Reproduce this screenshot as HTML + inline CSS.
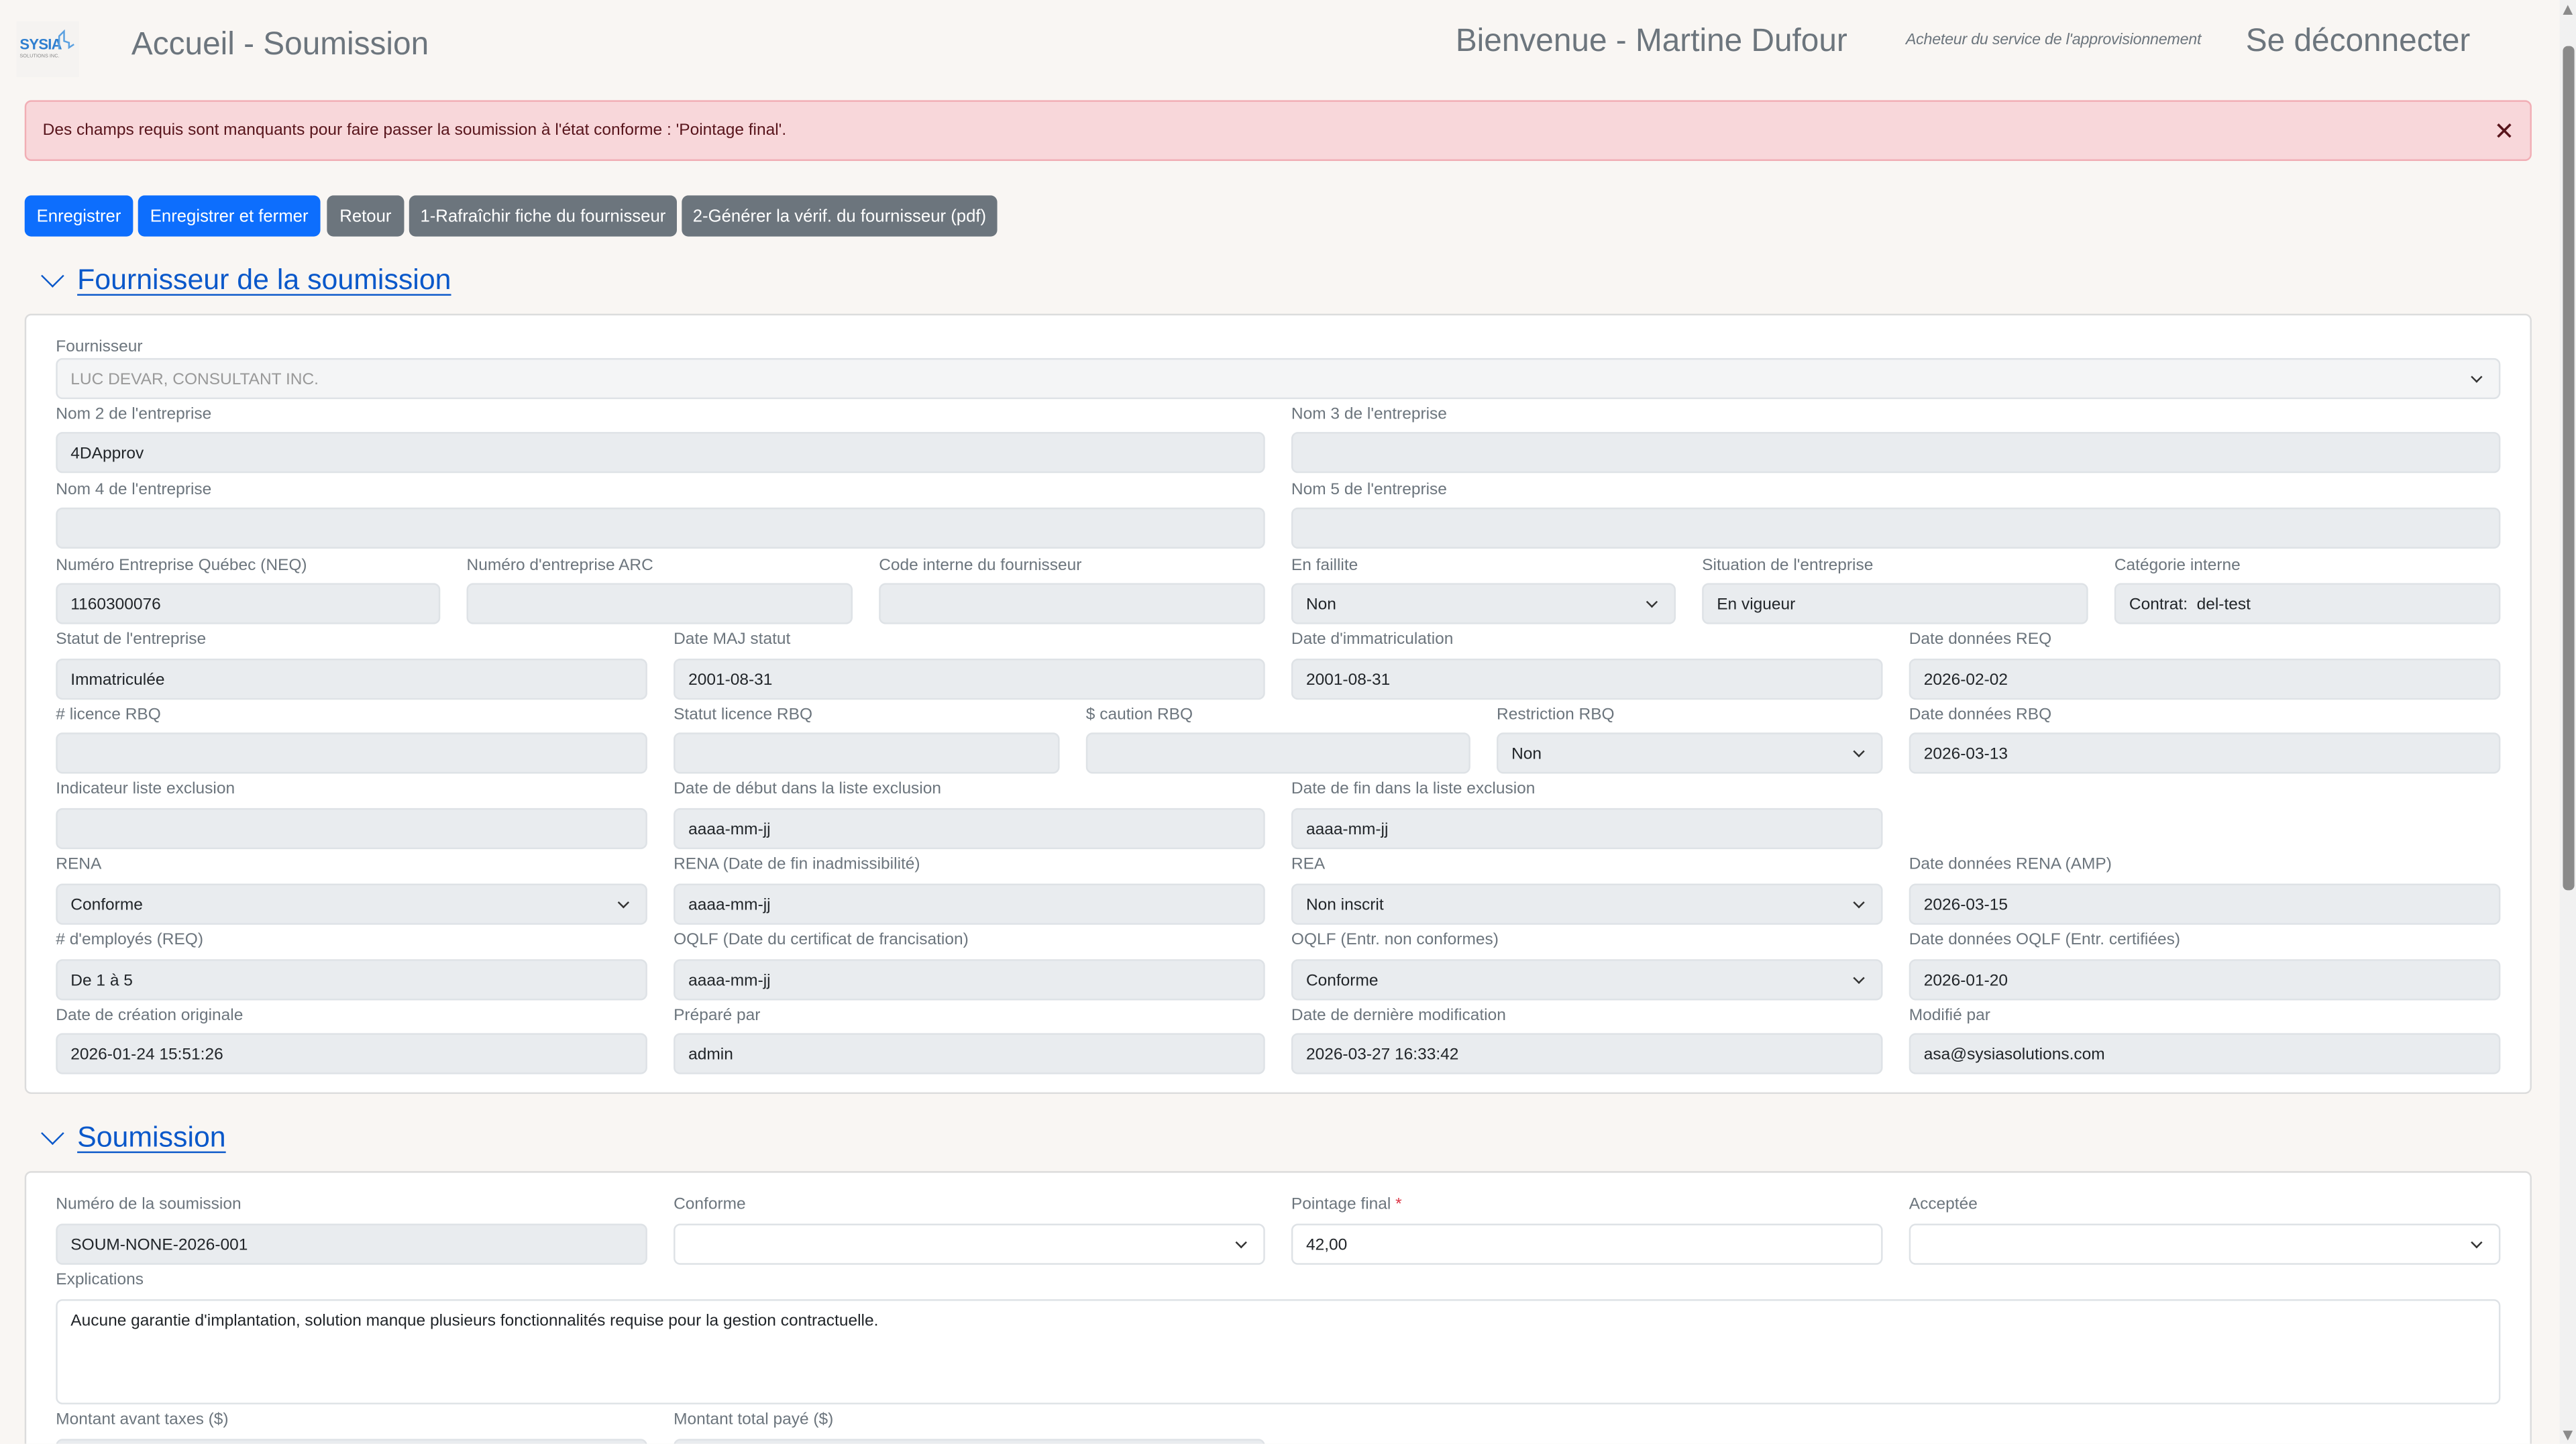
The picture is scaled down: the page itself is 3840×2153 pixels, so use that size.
<!DOCTYPE html>
<html><head><meta charset="utf-8"><style>
html,body{margin:0;padding:0;width:3840px;height:2152px;overflow:hidden;background:#f9f6f3;}
#r{position:absolute;left:0;top:0;width:1568px;height:879px;transform:scale(2.449);transform-origin:0 0;font-family:"Liberation Sans",sans-serif;overflow:hidden;}
.a{position:absolute;white-space:nowrap;}
.l{position:absolute;font-size:10px;line-height:12px;color:#6c757d;white-space:nowrap;margin-top:1.5px;}
.i{position:absolute;height:25px;box-sizing:border-box;border:1px solid #dee2e6;border-radius:4px;background:#e9ecef;font-size:10px;padding-left:8px;line-height:25px;color:#212529;white-space:nowrap;}
.w{background:#fff;}
.s::after{content:"";position:absolute;right:11px;top:8px;width:4px;height:4px;border-right:1px solid #333;border-bottom:1px solid #333;transform:rotate(45deg);}
.b{position:absolute;top:119px;height:25px;border-radius:4px;color:#fff;font-size:10.5px;line-height:27px;text-align:center;}
.bp{background:#0d6efd}.bg{background:#6c757d}
.h{position:absolute;font-size:17.5px;color:#0a58ca;text-decoration:underline;text-underline-offset:3px;white-space:nowrap;}
.ch{position:absolute;width:9px;height:9px;border-right:1.3px solid #0a58ca;border-bottom:1.3px solid #0a58ca;transform:rotate(45deg);}
.card{position:absolute;left:15px;width:1526px;background:#fff;border:1px solid #dcdcdc;border-radius:4px;box-sizing:border-box;}
</style></head><body><div id="r">
<div class="a" style="left:10px;top:13px;width:38px;height:34px;background:#f5f3f1"></div>
<div class="a" style="left:12px;top:22px;font-size:9px;font-weight:bold;color:#2f7fd0;letter-spacing:-0.3px">SYSIA</div>
<div class="a" style="left:12px;top:32px;font-size:3px;color:#888">SOLUTIONS INC.</div>
<svg class="a" style="left:34px;top:18px" width="12" height="14" viewBox="0 0 12 14"><path d="M2 12V4l3-3v6l3 1v3l3-2" fill="none" stroke="#5aa0e0" stroke-width="1"/></svg>
<div class="a" style="left:80px;top:16px;font-size:19.5px;color:#6c757d">Accueil - Soumission</div>
<div class="a" style="left:886px;top:14px;font-size:19.5px;color:#6c757d">Bienvenue - Martine Dufour</div>
<div class="a" style="left:1160px;top:19px;font-size:9.5px;color:#6c757d;font-style:italic;letter-spacing:-0.1px">Acheteur du service de l'approvisionnement</div>
<div class="a" style="left:1367px;top:14px;font-size:19.5px;color:#6c757d">Se déconnecter</div>
<div class="a" style="left:1558px;top:0;width:10px;height:879px;background:#f1f1f1"></div>
<div class="a" style="left:1560px;top:28px;width:7px;height:514px;background:#8a8a8a;border-radius:3px"></div>
<div class="a" style="left:1560px;top:3px;width:0;height:0;border-left:3.5px solid transparent;border-right:3.5px solid transparent;border-bottom:6px solid #8a8a8a"></div>
<div class="a" style="left:1560px;top:871px;width:0;height:0;border-left:3.5px solid transparent;border-right:3.5px solid transparent;border-top:6px solid #8a8a8a"></div>
<div class="a" style="left:15px;top:61px;width:1526px;height:37px;box-sizing:border-box;background:#f8d7da;border:1px solid #f1aeb5;border-radius:4px"></div>
<div class="a" style="left:26px;top:74px;font-size:10px;color:#58151c">Des champs requis sont manquants pour faire passer la soumission à l'état conforme : 'Pointage final'.</div>
<div class="a" style="left:1518px;top:71px;font-size:15px;color:#58151c;font-weight:300">✕</div>
<div class="b bp" style="left:15px;width:66px">Enregistrer</div>
<div class="b bp" style="left:84px;width:111px">Enregistrer et fermer</div>
<div class="b bg" style="left:199px;width:47px">Retour</div>
<div class="b bg" style="left:249px;width:163px">1-Rafraîchir fiche du fournisseur</div>
<div class="b bg" style="left:415px;width:192px">2-Générer la vérif. du fournisseur (pdf)</div>
<div class="ch" style="left:27px;top:163px"></div>
<div class="h" style="left:47px;top:160px">Fournisseur de la soumission</div>
<div class="card" style="top:191px;height:475px"></div>
<div class="l" style="left:34px;top:204px">Fournisseur</div>
<div class="i s" style="left:34px;top:218px;width:1488px;background:#f4f5f6;color:#999">LUC DEVAR, CONSULTANT INC.</div>

<div class="l" style="left:34px;top:245px">Nom 2 de l'entreprise</div><div class="i" style="left:34px;top:263px;width:736px">4DApprov</div>
<div class="l" style="left:786px;top:245px">Nom 3 de l'entreprise</div><div class="i" style="left:786px;top:263px;width:736px"></div>

<div class="l" style="left:34px;top:291px">Nom 4 de l'entreprise</div><div class="i" style="left:34px;top:309px;width:736px"></div>
<div class="l" style="left:786px;top:291px">Nom 5 de l'entreprise</div><div class="i" style="left:786px;top:309px;width:736px"></div>

<div class="l" style="left:34px;top:337px">Numéro Entreprise Québec (NEQ)</div><div class="i" style="left:34px;top:355px;width:234px">1160300076</div>
<div class="l" style="left:284px;top:337px">Numéro d'entreprise ARC</div><div class="i" style="left:284px;top:355px;width:235px"></div>
<div class="l" style="left:535px;top:337px">Code interne du fournisseur</div><div class="i" style="left:535px;top:355px;width:235px"></div>
<div class="l" style="left:786px;top:337px">En faillite</div><div class="i s" style="left:786px;top:355px;width:234px">Non</div>
<div class="l" style="left:1036px;top:337px">Situation de l'entreprise</div><div class="i" style="left:1036px;top:355px;width:235px">En vigueur</div>
<div class="l" style="left:1287px;top:337px">Catégorie interne</div><div class="i" style="left:1287px;top:355px;width:235px">Contrat:&nbsp; del-test</div>

<div class="l" style="left:34px;top:382px">Statut de l'entreprise</div><div class="i" style="left:34px;top:401px;width:360px">Immatriculée</div>
<div class="l" style="left:410px;top:382px">Date MAJ statut</div><div class="i" style="left:410px;top:401px;width:360px">2001-08-31</div>
<div class="l" style="left:786px;top:382px">Date d'immatriculation</div><div class="i" style="left:786px;top:401px;width:360px">2001-08-31</div>
<div class="l" style="left:1162px;top:382px">Date données REQ</div><div class="i" style="left:1162px;top:401px;width:360px">2026-02-02</div>

<div class="l" style="left:34px;top:428px"># licence RBQ</div><div class="i" style="left:34px;top:446px;width:360px"></div>
<div class="l" style="left:410px;top:428px">Statut licence RBQ</div><div class="i" style="left:410px;top:446px;width:235px"></div>
<div class="l" style="left:661px;top:428px">$ caution RBQ</div><div class="i" style="left:661px;top:446px;width:234px"></div>
<div class="l" style="left:911px;top:428px">Restriction RBQ</div><div class="i s" style="left:911px;top:446px;width:235px">Non</div>
<div class="l" style="left:1162px;top:428px">Date données RBQ</div><div class="i" style="left:1162px;top:446px;width:360px">2026-03-13</div>

<div class="l" style="left:34px;top:473px">Indicateur liste exclusion</div><div class="i" style="left:34px;top:492px;width:360px"></div>
<div class="l" style="left:410px;top:473px">Date de début dans la liste exclusion</div><div class="i" style="left:410px;top:492px;width:360px">aaaa-mm-jj</div>
<div class="l" style="left:786px;top:473px">Date de fin dans la liste exclusion</div><div class="i" style="left:786px;top:492px;width:360px">aaaa-mm-jj</div>

<div class="l" style="left:34px;top:519px">RENA</div><div class="i s" style="left:34px;top:538px;width:360px">Conforme</div>
<div class="l" style="left:410px;top:519px">RENA (Date de fin inadmissibilité)</div><div class="i" style="left:410px;top:538px;width:360px">aaaa-mm-jj</div>
<div class="l" style="left:786px;top:519px">REA</div><div class="i s" style="left:786px;top:538px;width:360px">Non inscrit</div>
<div class="l" style="left:1162px;top:519px">Date données RENA (AMP)</div><div class="i" style="left:1162px;top:538px;width:360px">2026-03-15</div>

<div class="l" style="left:34px;top:565px"># d'employés (REQ)</div><div class="i" style="left:34px;top:584px;width:360px">De 1 à 5</div>
<div class="l" style="left:410px;top:565px">OQLF (Date du certificat de francisation)</div><div class="i" style="left:410px;top:584px;width:360px">aaaa-mm-jj</div>
<div class="l" style="left:786px;top:565px">OQLF (Entr. non conformes)</div><div class="i s" style="left:786px;top:584px;width:360px">Conforme</div>
<div class="l" style="left:1162px;top:565px">Date données OQLF (Entr. certifiées)</div><div class="i" style="left:1162px;top:584px;width:360px">2026-01-20</div>

<div class="l" style="left:34px;top:611px">Date de création originale</div><div class="i" style="left:34px;top:629px;width:360px">2026-01-24 15:51:26</div>
<div class="l" style="left:410px;top:611px">Préparé par</div><div class="i" style="left:410px;top:629px;width:360px">admin</div>
<div class="l" style="left:786px;top:611px">Date de dernière modification</div><div class="i" style="left:786px;top:629px;width:360px">2026-03-27 16:33:42</div>
<div class="l" style="left:1162px;top:611px">Modifié par</div><div class="i" style="left:1162px;top:629px;width:360px">asa@sysiasolutions.com</div>

<div class="ch" style="left:27px;top:685px"></div>
<div class="h" style="left:47px;top:682px">Soumission</div>
<div class="card" style="top:713px;height:200px"></div>
<div class="l" style="left:34px;top:726px">Numéro de la soumission</div><div class="i" style="left:34px;top:745px;width:360px">SOUM-NONE-2026-001</div>
<div class="l" style="left:410px;top:726px">Conforme</div><div class="i s w" style="left:410px;top:745px;width:360px"></div>
<div class="l" style="left:786px;top:726px">Pointage final <span style="color:#dc3545">*</span></div><div class="i w" style="left:786px;top:745px;width:360px">42,00</div>
<div class="l" style="left:1162px;top:726px">Acceptée</div><div class="i s w" style="left:1162px;top:745px;width:360px"></div>
<div class="l" style="left:34px;top:772px">Explications</div>
<div class="i w" style="left:34px;top:791px;width:1488px;height:64px;line-height:25px">Aucune garantie d'implantation, solution manque plusieurs fonctionnalités requise pour la gestion contractuelle.</div>
<div class="l" style="left:34px;top:857px">Montant avant taxes ($)</div><div class="i" style="left:34px;top:876px;width:360px"></div>
<div class="l" style="left:410px;top:857px">Montant total payé ($)</div><div class="i" style="left:410px;top:876px;width:360px"></div>
</div></body></html>
